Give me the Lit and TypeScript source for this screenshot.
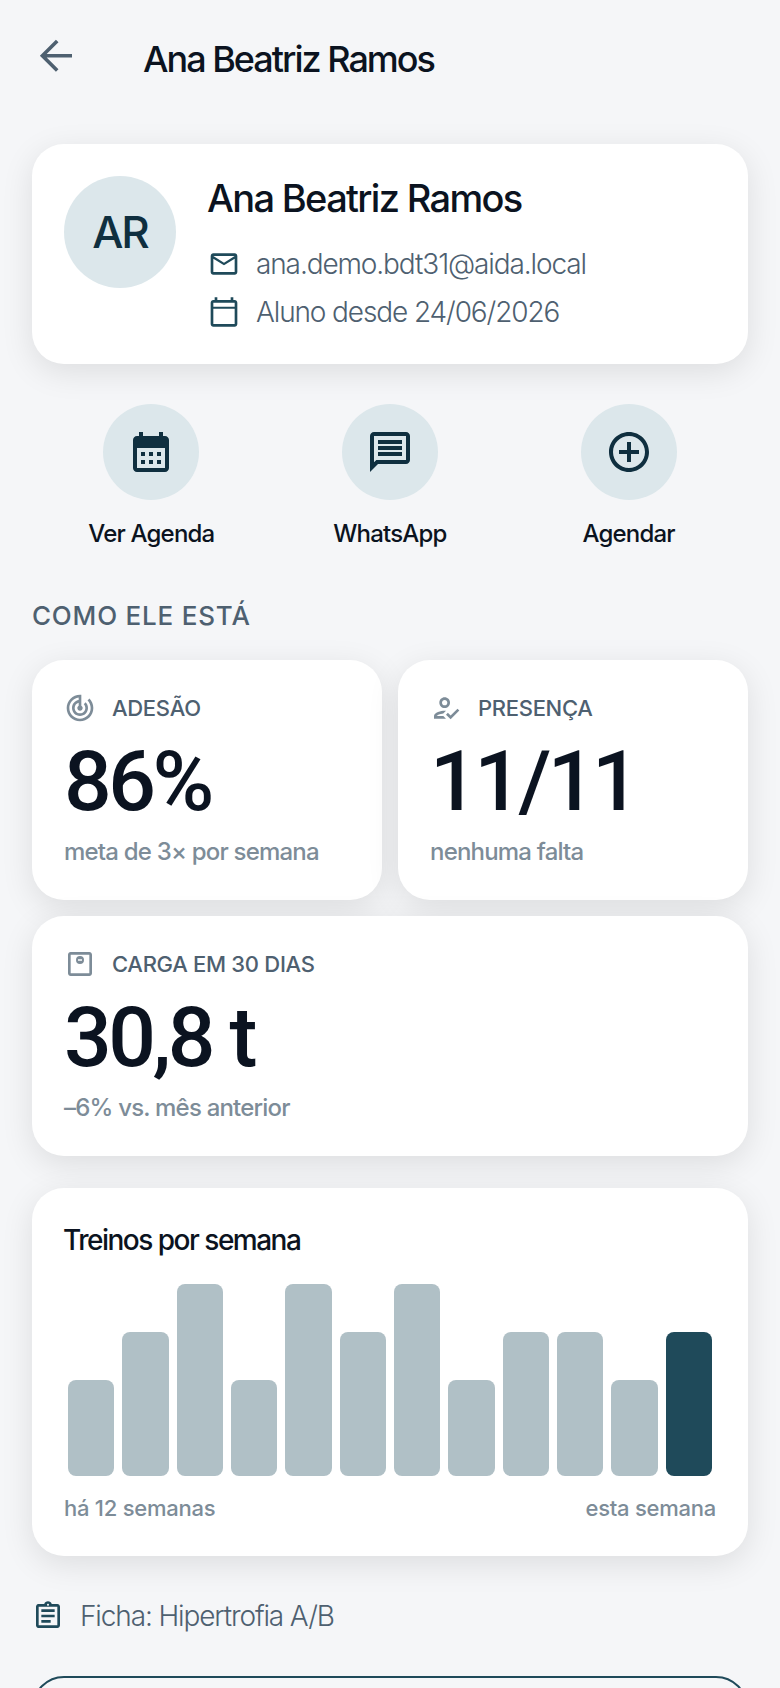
import { LitElement, html, css, svg } from "lit";
import { customElement } from "lit/decorators.js";

const bars = [2, 3, 4, 2, 4, 3, 4, 2, 3, 3, 2, 3];

const icon = (size: number, body: unknown, cls = "") =>
  html`<svg class=${cls} width=${size} height=${size} viewBox="0 0 24 24" fill="currentColor">${body}</svg>`;

const P = {
  mail: svg`<path d="M20 4H4c-1.1 0-1.99.9-1.99 2L2 18c0 1.1.9 2 2 2h16c1.1 0 2-.9 2-2V6c0-1.1-.9-2-2-2zm0 14H4V8l8 5 8-5v10zm-8-7L4 6h16l-8 5z"/>`,
  cal: svg`<path fill-rule="evenodd" d="M20 3h-1V1h-2v2H7V1H5v2H4c-1.1 0-2 .9-2 2v16c0 1.1.9 2 2 2h16c1.1 0 2-.9 2-2V5c0-1.1-.9-2-2-2zM4 5h16v3H4zM4 9.500h16V21H4z"/>`,
  calFill: svg`<path d="M19 4h-1V2h-2v2H8V2H6v2H5c-1.1 0-2 .9-2 2v14c0 1.1.9 2 2 2h14c1.1 0 2-.9 2-2V6c0-1.1-.9-2-2-2zm0 16H5V10h14v10zM9 14H7v-2h2v2zm4 0h-2v-2h2v2zm4 0h-2v-2h2v2zm-8 4H7v-2h2v2zm4 0h-2v-2h2v2zm4 0h-2v-2h2v2z"/>`,
  chat: svg`<path d="M20 2H4c-1.1 0-2 .9-2 2v18l4-4h14c1.1 0 2-.9 2-2V4c0-1.1-.9-2-2-2zm0 14H5.170L4 17.170V4h16v12zM6 12h12v2H6zm0-3h12v2H6zm0-3h12v2H6z"/>`,
  add: svg`<path d="M13 7h-2v4H7v2h4v4h2v-4h4v-2h-4V7zm-1-5C6.48 2 2 6.48 2 12s4.48 10 10 10 10-4.48 10-10S17.52 2 12 2zm0 18c-4.41 0-8-3.59-8-8s3.59-8 8-8 8 3.59 8 8-3.59 8-8 8z"/>`,
  track: svg`<path d="M19.07 4.93l-1.41 1.41C19.1 7.79 20 9.79 20 12c0 4.42-3.58 8-8 8s-8-3.58-8-8c0-4.08 3.05-7.44 7-7.93v2.02C8.16 6.57 6 9.03 6 12c0 3.31 2.69 6 6 6s6-2.69 6-6c0-1.66-.67-3.16-1.76-4.24l-1.41 1.41C15.55 9.9 16 10.9 16 12c0 2.21-1.79 4-4 4s-4-1.79-4-4c0-1.86 1.28-3.41 3-3.86v2.14c-.6.35-1 .98-1 1.72 0 1.1.9 2 2 2s2-.9 2-2c0-.74-.4-1.38-1-1.72V2h-1C6.48 2 2 6.48 2 12s4.48 10 10 10 10-4.48 10-10c0-2.76-1.12-5.26-2.93-7.07z"/>`,
  reg: svg`<path d="M11 4c-2.21 0-4 1.79-4 4s1.79 4 4 4 4-1.79 4-4-1.79-4-4-4zm0 6c-1.1 0-2-.9-2-2s.9-2 2-2 2 .9 2 2-.9 2-2 2zM5 18c.2-.63 2.57-1.68 4.96-1.94l2.04-2c-.39-.04-.68-.06-1-.06-2.67 0-8 1.34-8 4v2h9l-2-2H5zM20.6 12.5l-5.13 5.17-2.07-2.08L12 17l3.47 3.5L22 13.91z"/>`,
  weight: svg`<path d="M19 3H5c-1.1 0-2 .9-2 2v14c0 1.1.9 2 2 2h14c1.1 0 2-.9 2-2V5c0-1.1-.9-2-2-2zm0 16H5V5h14v14z"/><path fill-rule="evenodd" d="M12 6a3 3 0 1 0 0 6 3 3 0 0 0 0-6zm-1.500 2.500h3v1h-3z"/>`,
  clip: svg`<path d="M7 15h7v2H7zm0-4h10v2H7zm0-4h10v2H7zm12-4h-4.180C14.400 1.840 13.300 1 12 1c-1.300 0-2.400.84-2.820 2H5c-.14 0-.27.01-.4.04-.39.08-.74.28-1.010.55-.18.18-.33.4-.43.64-.1.23-.16.49-.16.77v14c0 .27.06.54.16.78s.25.45.43.64c.27.27.62.47 1.010.55.13.02.26.03.4.03h14c1.100 0 2-.9 2-2V5c0-1.100-.9-2-2-2zm-7-.25c.41 0 .75.34.75.75s-.34.75-.75.75-.75-.34-.75-.75.34-.75.75-.75zM19 19H5V5h14v14z"/>`,
  back: svg`<path d="M20 11.900H5.200M12.600 4.500L5.200 11.900l7.400 7.400" fill="none" stroke="currentColor" stroke-width="1.800"/>`,
};

@customElement("app-root")
export class AppRoot extends LitElement {
  static styles = css`
    :host {
      display: block;
      height: 1688px;
      overflow: hidden;
      background: #f5f6f8;
      font-family: Inter, "Noto Sans", sans-serif;
      color: #0b1320;
    }
    svg { display: block; flex: none; }
    .page { padding: 32px 32px 0; display: flex; flex-direction: column; }
    .header { display: flex; align-items: center; gap: 64px; height: 48px; margin-bottom: 64px; }
    .back { color: #4e6070; }
    .header h1 { margin: 6px 0 0 -1px; font-size: 36px; line-height: 48px; font-weight: 550; letter-spacing: -2px; }
    .card { background: #fff; border-radius: 32px; box-shadow: 0 8px 32px rgba(0, 0, 0, 0.1); }
    .profile { display: flex; gap: 32px; padding: 32px 32px 36px; }
    .avatar {
      width: 112px; height: 112px; border-radius: 50%; background: #dce7eb; color: #0f2f3f;
      display: flex; align-items: center; justify-content: center;
      font-size: 44px; font-weight: 500; letter-spacing: -2px; flex: none;
    }
    .profile h2 { margin: 0 0 28px -1px; font-size: 38px; line-height: 44px; font-weight: 550; letter-spacing: -1.670px; }
    .rows { display: flex; flex-direction: column; gap: 16px; }
    .row { display: flex; align-items: center; gap: 16px; height: 32px; font-size: 28px; font-weight: 300; color: #4e6070; letter-spacing: -1.120px; }
    .row svg { color: #1f4a5a; }
    .actions { display: grid; grid-template-columns: repeat(3, 1fr); margin-top: 40px; }
    .action { display: flex; flex-direction: column; align-items: center; gap: 16px; }
    .circle { width: 96px; height: 96px; border-radius: 50%; background: #dce7eb; color: #0f2f3f; display: flex; align-items: center; justify-content: center; }
    .action span { font-size: 24px; line-height: 36px; font-weight: 500; letter-spacing: -0.800px; }
    .section { margin: 48px 0 28px; font-size: 26px; line-height: 32px; font-weight: 500; letter-spacing: 0.800px; color: #4e6070; }
    .stats { display: grid; grid-template-columns: 1fr 1fr; gap: 16px; }
    .stat { padding: 32px; }
    .wide { grid-column: span 2; }
    .stat-head { display: flex; align-items: center; gap: 16px; height: 32px; font-size: 22px; font-weight: 500; letter-spacing: -0.300px; color: #4e6070; }
    .stat-head svg { color: #7d8c98; }
    .value { margin: 12px 0 8px; font-family: Roboto, Inter, sans-serif; font-size: 84px; line-height: 92px; font-weight: 500; letter-spacing: -3.500px; }
    .sub { font-size: 24px; line-height: 32px; font-weight: 500; letter-spacing: -0.800px; color: #7d8c98; }
    .chart { margin-top: 32px; padding: 32px; }
    .chart h3 { margin: 0 0 24px -1px; font-size: 28px; line-height: 40px; font-weight: 500; letter-spacing: -1.500px; }
    .bars { display: flex; align-items: flex-end; gap: 8px; height: 192px; padding: 0 4px; }
    .bar { flex: 1; background: #b0c0c6; border-radius: 8px; }
    .bar.now { background: #1f4a5a; }
    .caption { display: flex; justify-content: space-between; margin-top: 16px; font-size: 22px; line-height: 32px; font-weight: 500; letter-spacing: -0.250px; color: #7d8c98; }
    .plan { display: flex; align-items: center; gap: 16px; height: 32px; margin-top: 44px; font-size: 28px; font-weight: 300; color: #4e6070; letter-spacing: -1.120px; }
    .plan svg { color: #1f4a5a; }
    .btn { display: block; margin-top: 44px; height: 96px; border: 2px solid #1f4a5a; border-radius: 32px; box-sizing: border-box; }
  `;

  private stat(ic: unknown, label: string, value: string, sub: string, wide = false) {
    return html`<div class="card stat ${wide ? "wide" : ""}">
      <div class="stat-head">${icon(32, ic)}<span>${label}</span></div>
      <div class="value">${value}</div>
      <div class="sub">${sub}</div>
    </div>`;
  }

  render() {
    return html`<div class="page">
      <div class="header">
        ${icon(48, P.back, "back")}
        <h1>Ana Beatriz Ramos</h1>
      </div>
      <div class="card profile">
        <div class="avatar">AR</div>
        <div>
          <h2>Ana Beatriz Ramos</h2>
          <div class="rows">
            <div class="row">${icon(32, P.mail)}<span>ana.demo.bdt31@aida.local</span></div>
            <div class="row">${icon(32, P.cal)}<span>Aluno desde 24/06/2026</span></div>
          </div>
        </div>
      </div>
      <div class="actions">
        <div class="action"><div class="circle">${icon(48, P.calFill)}</div><span>Ver Agenda</span></div>
        <div class="action"><div class="circle">${icon(48, P.chat)}</div><span>WhatsApp</span></div>
        <div class="action"><div class="circle">${icon(48, P.add)}</div><span>Agendar</span></div>
      </div>
      <div class="section">COMO ELE ESTÁ</div>
      <div class="stats">
        ${this.stat(P.track, "ADESÃO", "86%", "meta de 3× por semana")}
        ${this.stat(P.reg, "PRESENÇA", "11/11", "nenhuma falta")}
        ${this.stat(P.weight, "CARGA EM 30 DIAS", "30,8 t", "–6% vs. mês anterior", true)}
      </div>
      <div class="card chart">
        <h3>Treinos por semana</h3>
        <div class="bars">
          ${bars.map(
            (b, i) => html`<div class="bar ${i === bars.length - 1 ? "now" : ""}" style="height:${b * 48}px"></div>`
          )}
        </div>
        <div class="caption"><span>há 12 semanas</span><span>esta semana</span></div>
      </div>
      <div class="plan">${icon(32, P.clip)}<span>Ficha: Hipertrofia A/B</span></div>
      <div class="btn"></div>
    </div>`;
  }
}
